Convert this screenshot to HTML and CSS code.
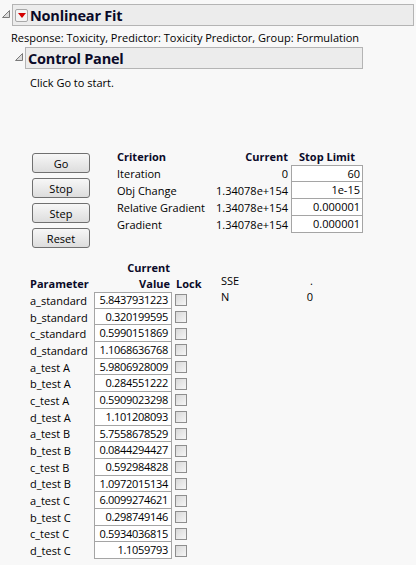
FILE: index.html
```html
<!DOCTYPE html>
<html lang="en">
<head>
    <meta charset="UTF-8">
    <title>Nonlinear Fit</title>
    <link rel="stylesheet" href="styles.css">
</head>
<body>
    <div class="outline-head top">
        <svg class="disclose" width="12" height="22" viewBox="0 0 12 22"><polygon points="2.5,13.5 9.5,6.5 9.5,13.5" /></svg>
        <div class="title-box wide">
            <span class="menu-btn"><svg width="8" height="5" viewBox="0 0 8 5"><polygon points="0,0 8,0 4,5" fill="#d40000" /></svg></span>
            <span class="title">Nonlinear Fit</span>
        </div>
    </div>
    <div class="response">Response: Toxicity, Predictor: Toxicity Predictor, Group: Formulation</div>
    <div class="outline-head sub">
        <svg class="disclose" width="12" height="22" viewBox="0 0 12 22"><polygon points="2.5,13.5 9.5,6.5 9.5,13.5" /></svg>
        <div class="title-box panel-box">
            <span class="title">Control Panel</span>
        </div>
    </div>

    <div class="panel">
        <p class="hint">Click Go to start.</p>

        <div class="controls">
            <div class="buttons">
                <button class="btn">Go</button>
                <button class="btn">Stop</button>
                <button class="btn">Step</button>
                <button class="btn">Reset</button>
            </div>
            <div class="criteria">
                <div class="hd">Criterion</div><div class="hd num">Current</div><div class="hd limit-hd">Stop Limit</div>
                <div>Iteration</div><div class="num">0</div><div class="limit first">60</div>
                <div>Obj Change</div><div class="num">1.34078e+154</div><div class="limit">1e-15</div>
                <div>Relative Gradient</div><div class="num">1.34078e+154</div><div class="limit">0.000001</div>
                <div>Gradient</div><div class="num">1.34078e+154</div><div class="limit">0.000001</div>
            </div>
        </div>

        <div class="fit">
            <div class="params" id="params">
                <div class="prow head">
                    <span class="pname hd">Parameter</span>
                    <span class="pval-hd hd">Current<br>Value</span>
                    <span class="lock-hd hd">Lock</span>
                </div>
            </div>
            <div class="stats">
                <div>SSE</div><div class="num">.</div>
                <div>N</div><div class="num">0</div>
            </div>
        </div>
    </div>

    <script>
        const params = [
            ['a_standard', '5.8437931223'],
            ['b_standard', '0.320199595'],
            ['c_standard', '0.5990151869'],
            ['d_standard', '1.1068636768'],
            ['a_test A', '5.9806928009'],
            ['b_test A', '0.284551222'],
            ['c_test A', '0.5909023298'],
            ['d_test A', '1.101208093'],
            ['a_test B', '5.7558678529'],
            ['b_test B', '0.0844294427'],
            ['c_test B', '0.592984828'],
            ['d_test B', '1.0972015134'],
            ['a_test C', '6.0099274621'],
            ['b_test C', '0.298749146'],
            ['c_test C', '0.5934036815'],
            ['d_test C', '1.1059793']
        ];
        const table = document.getElementById('params');
        params.forEach(function (p, i) {
            const row = document.createElement('div');
            row.className = 'prow';
            row.innerHTML = '<span class="pname">' + p[0] + '</span>' +
                '<span class="pval' + (i === 0 ? ' first' : '') + '">' + p[1] + '</span>' +
                '<span class="check"></span>';
            table.appendChild(row);
        });
    </script>
</body>
</html>
```

FILE: styles.css
```css
body {
    margin: 0;
    background: #f8f8f8;
    font-family: "Open Sans", "Noto Sans", sans-serif;
    font-size: 11px;
    color: #000;
}
.outline-head {
    display: flex;
    align-items: flex-start;
}
.outline-head.top {
    padding-top: 4px;
}
.outline-head.sub {
    margin-top: 1px;
    margin-left: 13px;
}
.disclose polygon {
    fill: #dcdcdc;
    stroke: #7a7a7a;
    stroke-width: 1;
}
.title-box {
    height: 20px;
    border: 1px solid #b4b4b4;
    background: #ececec;
    display: flex;
    align-items: center;
}
.title-box.wide {
    width: 400px;
}
.title-box.panel-box {
    width: 336px;
}
.menu-btn {
    width: 11px;
    height: 11px;
    margin-left: 2px;
    border: 1px solid #a8a8a8;
    border-radius: 2px;
    background: #f4f4f4;
    display: flex;
    align-items: center;
    justify-content: center;
}
.title {
    font-weight: bold;
    font-size: 14.5px;
    color: #0a0a28;
    margin-left: 2px;
    letter-spacing: -0.2px;
}
.response {
    margin: 4px 0 0 11px;
    line-height: 16px;
}
.panel {
    padding-left: 30px;
}
.hint {
    margin: 6px 0 0 0;
    line-height: 16px;
}
.controls {
    display: flex;
    margin-top: 58px;
}
.buttons {
    display: flex;
    flex-direction: column;
    gap: 5px;
    margin: 4px 0 0 2px;
}
.btn {
    width: 58px;
    height: 20px;
    padding: 0;
    border: 1px solid #707070;
    border-radius: 3px;
    background: linear-gradient(#f7f7f7, #dddddd);
    font-family: inherit;
    font-size: 11px;
    color: #000;
}
.criteria {
    margin-left: 27px;
    display: grid;
    grid-template-columns: 90px 78px 72px;
    column-gap: 3px;
    grid-auto-rows: 17px;
    grid-template-rows: 16px;
    line-height: 17px;
}
.hd {
    font-weight: bold;
    color: #0a0a28;
    line-height: 16px;
}
.num {
    text-align: right;
}
.limit-hd {
    text-align: center;
}
.limit {
    background: #fff;
    border: 1px solid #a5a5a5;
    border-top: none;
    text-align: right;
    padding-right: 2px;
    line-height: 16px;
}
.limit.first {
    border-top: 1px solid #a5a5a5;
    line-height: 15px;
}
.fit {
    display: flex;
    margin-top: 12px;
    gap: 19px;
}
.params {
    width: 172px;
}
.prow {
    display: flex;
    align-items: center;
    height: 16.7px;
}
.prow.head {
    height: 32px;
    align-items: flex-end;
}
.pname {
    width: 64px;
}
.pval-hd {
    width: 76px;
    text-align: right;
    padding-right: 2px;
}
.lock-hd {
    margin-left: 4px;
}
.pval {
    width: 73px;
    height: 15.7px;
    padding-right: 3px;
    background: #fff;
    border: 1px solid #a5a5a5;
    border-top: none;
    text-align: right;
    letter-spacing: -0.3px;
    line-height: 15.7px;
}
.pval.first {
    border-top: 1px solid #a5a5a5;
    height: 14.7px;
    line-height: 14.7px;
}
.check {
    width: 10px;
    height: 10px;
    margin-left: 3px;
    border: 1px solid #8e8e8e;
    background: linear-gradient(135deg, #d8d8d8, #f6f6f6);
}
.stats {
    margin-top: 13px;
    display: grid;
    grid-template-columns: 79px 13px;
    grid-auto-rows: 16px;
    line-height: 16px;
    align-self: flex-start;
}
```
